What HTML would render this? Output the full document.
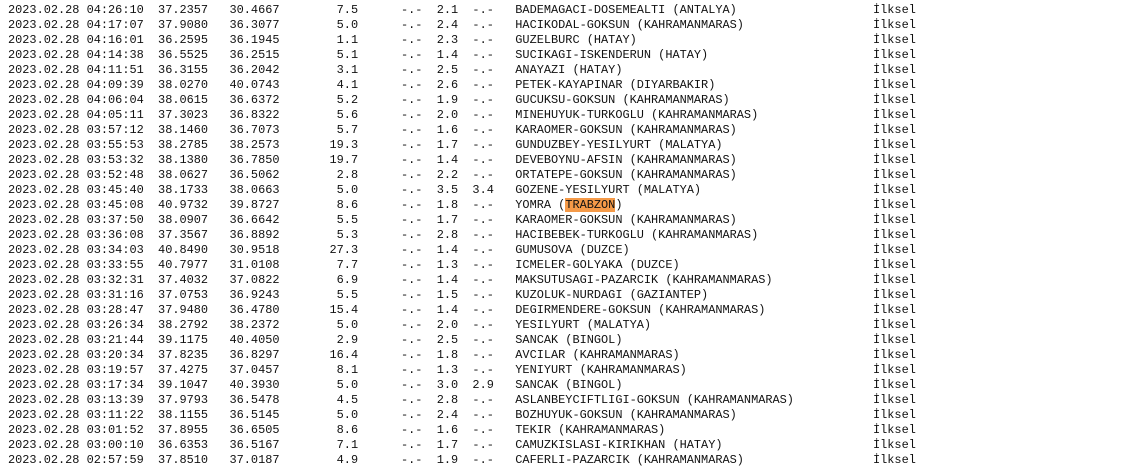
<!DOCTYPE html>
<html><head><meta charset="utf-8"><style>
html,body{margin:0;padding:0;background:#fff;width:1142px;height:457px;overflow:hidden}
.p{position:absolute;left:8px;top:3px;font-family:"Liberation Mono","DejaVu Sans Mono",monospace;font-size:11.92px;line-height:15px;color:#111}
.r{position:relative;height:15px;white-space:pre}
.i{position:absolute;left:865px;top:0}
.h{background:#f59a48}
</style></head><body><div class="p"><div class="r">2023.02.28 04:26:10  37.2357   30.4667        7.5      -.-  2.1  -.-   BADEMAGACI-DOSEMEALTI (ANTALYA)<span class="i">İlksel</span></div><div class="r">2023.02.28 04:17:07  37.9080   36.3077        5.0      -.-  2.4  -.-   HACIKODAL-GOKSUN (KAHRAMANMARAS)<span class="i">İlksel</span></div><div class="r">2023.02.28 04:16:01  36.2595   36.1945        1.1      -.-  2.3  -.-   GUZELBURC (HATAY)<span class="i">İlksel</span></div><div class="r">2023.02.28 04:14:38  36.5525   36.2515        5.1      -.-  1.4  -.-   SUCIKAGI-ISKENDERUN (HATAY)<span class="i">İlksel</span></div><div class="r">2023.02.28 04:11:51  36.3155   36.2042        3.1      -.-  2.5  -.-   ANAYAZI (HATAY)<span class="i">İlksel</span></div><div class="r">2023.02.28 04:09:39  38.0270   40.0743        4.1      -.-  2.6  -.-   PETEK-KAYAPINAR (DIYARBAKIR)<span class="i">İlksel</span></div><div class="r">2023.02.28 04:06:04  38.0615   36.6372        5.2      -.-  1.9  -.-   GUCUKSU-GOKSUN (KAHRAMANMARAS)<span class="i">İlksel</span></div><div class="r">2023.02.28 04:05:11  37.3023   36.8322        5.6      -.-  2.0  -.-   MINEHUYUK-TURKOGLU (KAHRAMANMARAS)<span class="i">İlksel</span></div><div class="r">2023.02.28 03:57:12  38.1460   36.7073        5.7      -.-  1.6  -.-   KARAOMER-GOKSUN (KAHRAMANMARAS)<span class="i">İlksel</span></div><div class="r">2023.02.28 03:55:53  38.2785   38.2573       19.3      -.-  1.7  -.-   GUNDUZBEY-YESILYURT (MALATYA)<span class="i">İlksel</span></div><div class="r">2023.02.28 03:53:32  38.1380   36.7850       19.7      -.-  1.4  -.-   DEVEBOYNU-AFSIN (KAHRAMANMARAS)<span class="i">İlksel</span></div><div class="r">2023.02.28 03:52:48  38.0627   36.5062        2.8      -.-  2.2  -.-   ORTATEPE-GOKSUN (KAHRAMANMARAS)<span class="i">İlksel</span></div><div class="r">2023.02.28 03:45:40  38.1733   38.0663        5.0      -.-  3.5  3.4   GOZENE-YESILYURT (MALATYA)<span class="i">İlksel</span></div><div class="r">2023.02.28 03:45:08  40.9732   39.8727        8.6      -.-  1.8  -.-   YOMRA (<span class="h">TRABZON</span>)<span class="i">İlksel</span></div><div class="r">2023.02.28 03:37:50  38.0907   36.6642        5.5      -.-  1.7  -.-   KARAOMER-GOKSUN (KAHRAMANMARAS)<span class="i">İlksel</span></div><div class="r">2023.02.28 03:36:08  37.3567   36.8892        5.3      -.-  2.8  -.-   HACIBEBEK-TURKOGLU (KAHRAMANMARAS)<span class="i">İlksel</span></div><div class="r">2023.02.28 03:34:03  40.8490   30.9518       27.3      -.-  1.4  -.-   GUMUSOVA (DUZCE)<span class="i">İlksel</span></div><div class="r">2023.02.28 03:33:55  40.7977   31.0108        7.7      -.-  1.3  -.-   ICMELER-GOLYAKA (DUZCE)<span class="i">İlksel</span></div><div class="r">2023.02.28 03:32:31  37.4032   37.0822        6.9      -.-  1.4  -.-   MAKSUTUSAGI-PAZARCIK (KAHRAMANMARAS)<span class="i">İlksel</span></div><div class="r">2023.02.28 03:31:16  37.0753   36.9243        5.5      -.-  1.5  -.-   KUZOLUK-NURDAGI (GAZIANTEP)<span class="i">İlksel</span></div><div class="r">2023.02.28 03:28:47  37.9480   36.4780       15.4      -.-  1.4  -.-   DEGIRMENDERE-GOKSUN (KAHRAMANMARAS)<span class="i">İlksel</span></div><div class="r">2023.02.28 03:26:34  38.2792   38.2372        5.0      -.-  2.0  -.-   YESILYURT (MALATYA)<span class="i">İlksel</span></div><div class="r">2023.02.28 03:21:44  39.1175   40.4050        2.9      -.-  2.5  -.-   SANCAK (BINGOL)<span class="i">İlksel</span></div><div class="r">2023.02.28 03:20:34  37.8235   36.8297       16.4      -.-  1.8  -.-   AVCILAR (KAHRAMANMARAS)<span class="i">İlksel</span></div><div class="r">2023.02.28 03:19:57  37.4275   37.0457        8.1      -.-  1.3  -.-   YENIYURT (KAHRAMANMARAS)<span class="i">İlksel</span></div><div class="r">2023.02.28 03:17:34  39.1047   40.3930        5.0      -.-  3.0  2.9   SANCAK (BINGOL)<span class="i">İlksel</span></div><div class="r">2023.02.28 03:13:39  37.9793   36.5478        4.5      -.-  2.8  -.-   ASLANBEYCIFTLIGI-GOKSUN (KAHRAMANMARAS)<span class="i">İlksel</span></div><div class="r">2023.02.28 03:11:22  38.1155   36.5145        5.0      -.-  2.4  -.-   BOZHUYUK-GOKSUN (KAHRAMANMARAS)<span class="i">İlksel</span></div><div class="r">2023.02.28 03:01:52  37.8955   36.6505        8.6      -.-  1.6  -.-   TEKIR (KAHRAMANMARAS)<span class="i">İlksel</span></div><div class="r">2023.02.28 03:00:10  36.6353   36.5167        7.1      -.-  1.7  -.-   CAMUZKISLASI-KIRIKHAN (HATAY)<span class="i">İlksel</span></div><div class="r">2023.02.28 02:57:59  37.8510   37.0187        4.9      -.-  1.9  -.-   CAFERLI-PAZARCIK (KAHRAMANMARAS)<span class="i">İlksel</span></div></div></body></html>
